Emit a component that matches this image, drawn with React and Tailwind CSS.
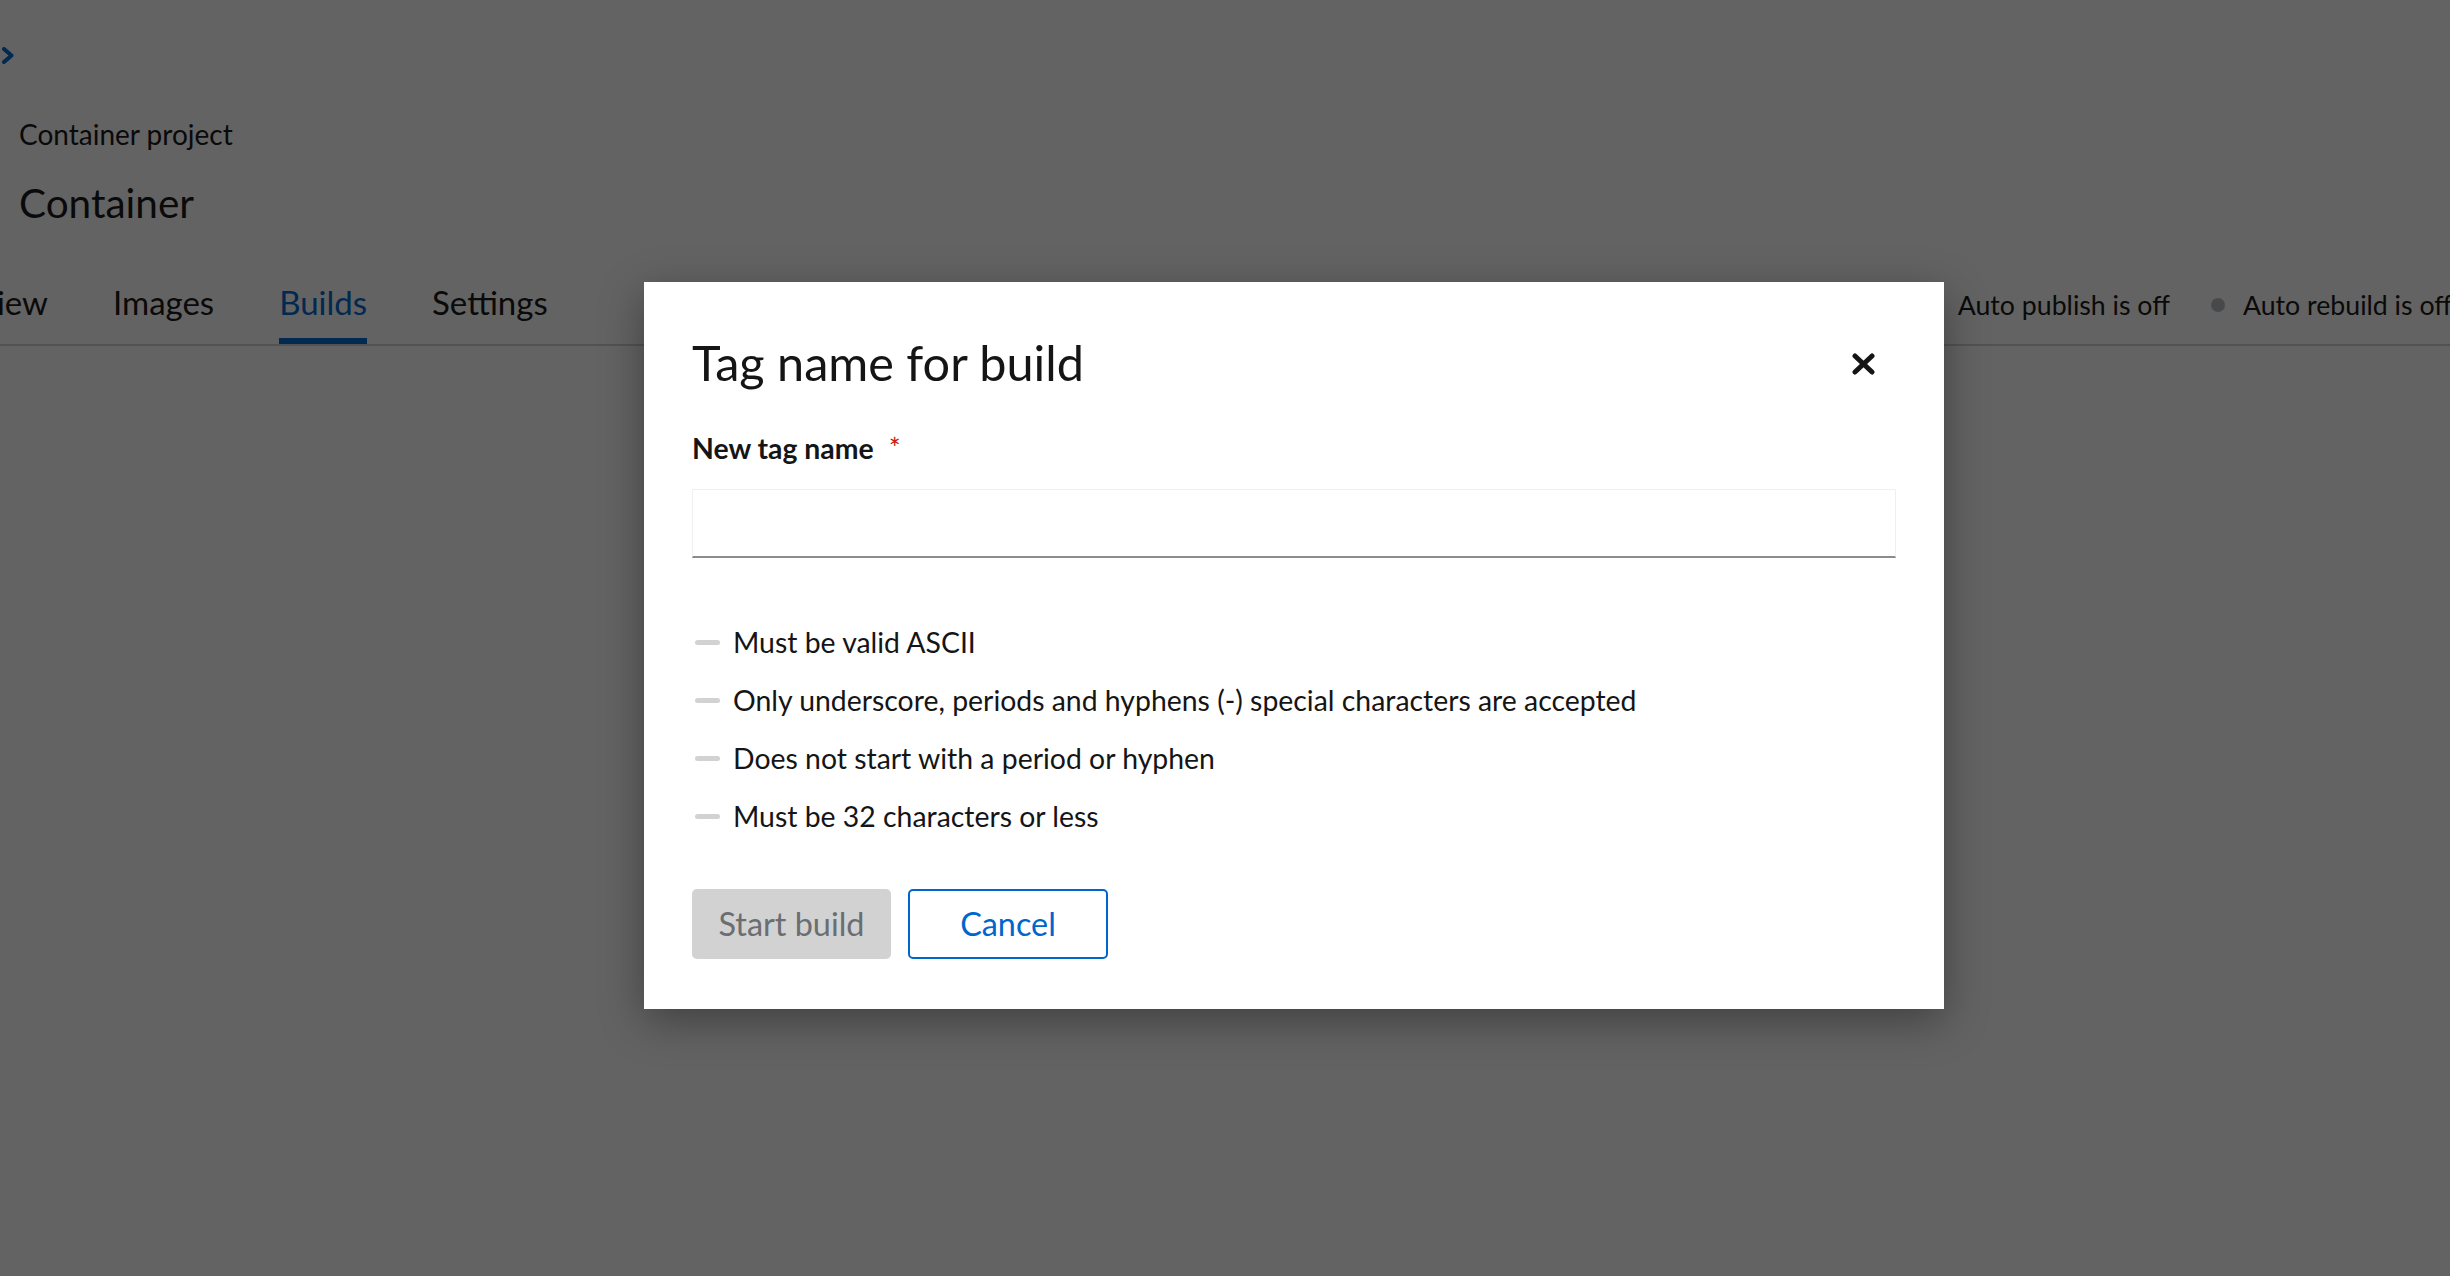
import React from 'react';

const tabs = ['Overview', 'Images', 'Builds', 'Settings'];

const rules = [
  'Must be valid ASCII',
  'Only underscore, periods and hyphens (-) special characters are accepted',
  'Does not start with a period or hyphen',
  'Must be 32 characters or less',
];

const ChevronRight = () => (
  <svg width="14" height="17" viewBox="0 0 14 17" fill="none">
    <polyline points="3,2 10.5,8.5 3,15" stroke="#0066cc" strokeWidth="4" strokeLinecap="round" strokeLinejoin="round" />
  </svg>
);

const CloseIcon = () => (
  <svg width="23" height="22" viewBox="0 0 23 22" fill="none">
    <line x1="3" y1="3" x2="20" y2="19" stroke="#151515" strokeWidth="5" strokeLinecap="round" />
    <line x1="20" y1="3" x2="3" y2="19" stroke="#151515" strokeWidth="5" strokeLinecap="round" />
  </svg>
);

export default function App() {
  return (
    <div className="relative h-[1276px] w-full overflow-hidden bg-white font-['Lato',sans-serif] text-[#151515]">
      {/* page behind the modal */}
      <div className="h-[64px] pt-[47px] pl-[1px]">
        <ChevronRight />
      </div>
      <div className="mt-[52px] pl-[19px] text-[28px] leading-[36px]">Container project</div>
      <div className="mt-[27px] pl-[19px] text-[40.5px] leading-[48px]">Container</div>

      <div className="mt-[35px] flex items-stretch gap-[65px] border-b-2 border-[#d2d2d2]">
        <div className="flex w-[48px] justify-end overflow-hidden">
          <div className="flex h-[82px] shrink-0 items-center whitespace-nowrap border-b-[6px] border-transparent pt-[6px] text-[33px]">
            {tabs[0]}
          </div>
        </div>
        {tabs.slice(1).map((t) => (
          <div
            key={t}
            className={
              t === 'Builds'
                ? 'flex h-[82px] items-center whitespace-nowrap border-b-[6px] border-[#0066cc] pt-[6px] text-[33px] text-[#0066cc]'
                : 'flex h-[82px] items-center whitespace-nowrap border-b-[6px] border-transparent pt-[6px] text-[33px]'
            }
          >
            {t}
          </div>
        ))}
        <div className="ml-auto mr-[-2px] flex items-center whitespace-nowrap pt-[4px] text-[26.7px]">
          <span className="h-[14px] w-[14px] rounded-full bg-[#b8bbbe]" />
          <span className="ml-[18px]">Auto publish is off</span>
          <span className="ml-[41px] h-[14px] w-[14px] rounded-full bg-[#b8bbbe]" />
          <span className="ml-[18px]">Auto rebuild is off</span>
        </div>
      </div>

      {/* backdrop + modal */}
      <div className="absolute inset-0 bg-[rgba(3,3,3,0.62)]">
        <div className="absolute left-[644px] top-[282px] w-[1300px] bg-white px-[48px] pb-[50px] pt-[52px] shadow-[0_12px_40px_rgba(3,3,3,0.35)]">
          <button className="absolute right-[69px] top-[71px] flex items-center justify-center">
            <CloseIcon />
          </button>

          <h1 className="text-[48.6px] leading-[56px]">Tag name for build</h1>

          <div className="mt-[38px] flex items-center text-[28.4px] font-bold leading-[40px]">
            New tag name
            <span className="ml-[15px] text-[28px] font-normal text-[#c9190b]">*</span>
          </div>

          <div className="mt-[21px] h-[69px] w-full border border-b-2 border-[#f0f0f0] border-b-[#8a8d90]" />

          <ul className="mt-[55px]">
            {rules.map((r) => (
              <li key={r} className="flex h-[58px] items-center text-[28.4px]">
                <span className="ml-[3px] h-[5px] w-[25px] shrink-0 rounded-full bg-[#d2d2d2]" />
                <span className="ml-[13px]">{r}</span>
              </li>
            ))}
          </ul>

          <div className="mt-[44px] flex gap-[17px]">
            <button className="h-[70px] w-[199px] rounded-[5px] bg-[#d2d2d2] text-[32.4px] text-[#6a6e73]">
              Start build
            </button>
            <button className="h-[70px] w-[200px] rounded-[5px] border-2 border-[#0066cc] text-[32.4px] text-[#0066cc]">
              Cancel
            </button>
          </div>
        </div>
      </div>
    </div>
  );
}
